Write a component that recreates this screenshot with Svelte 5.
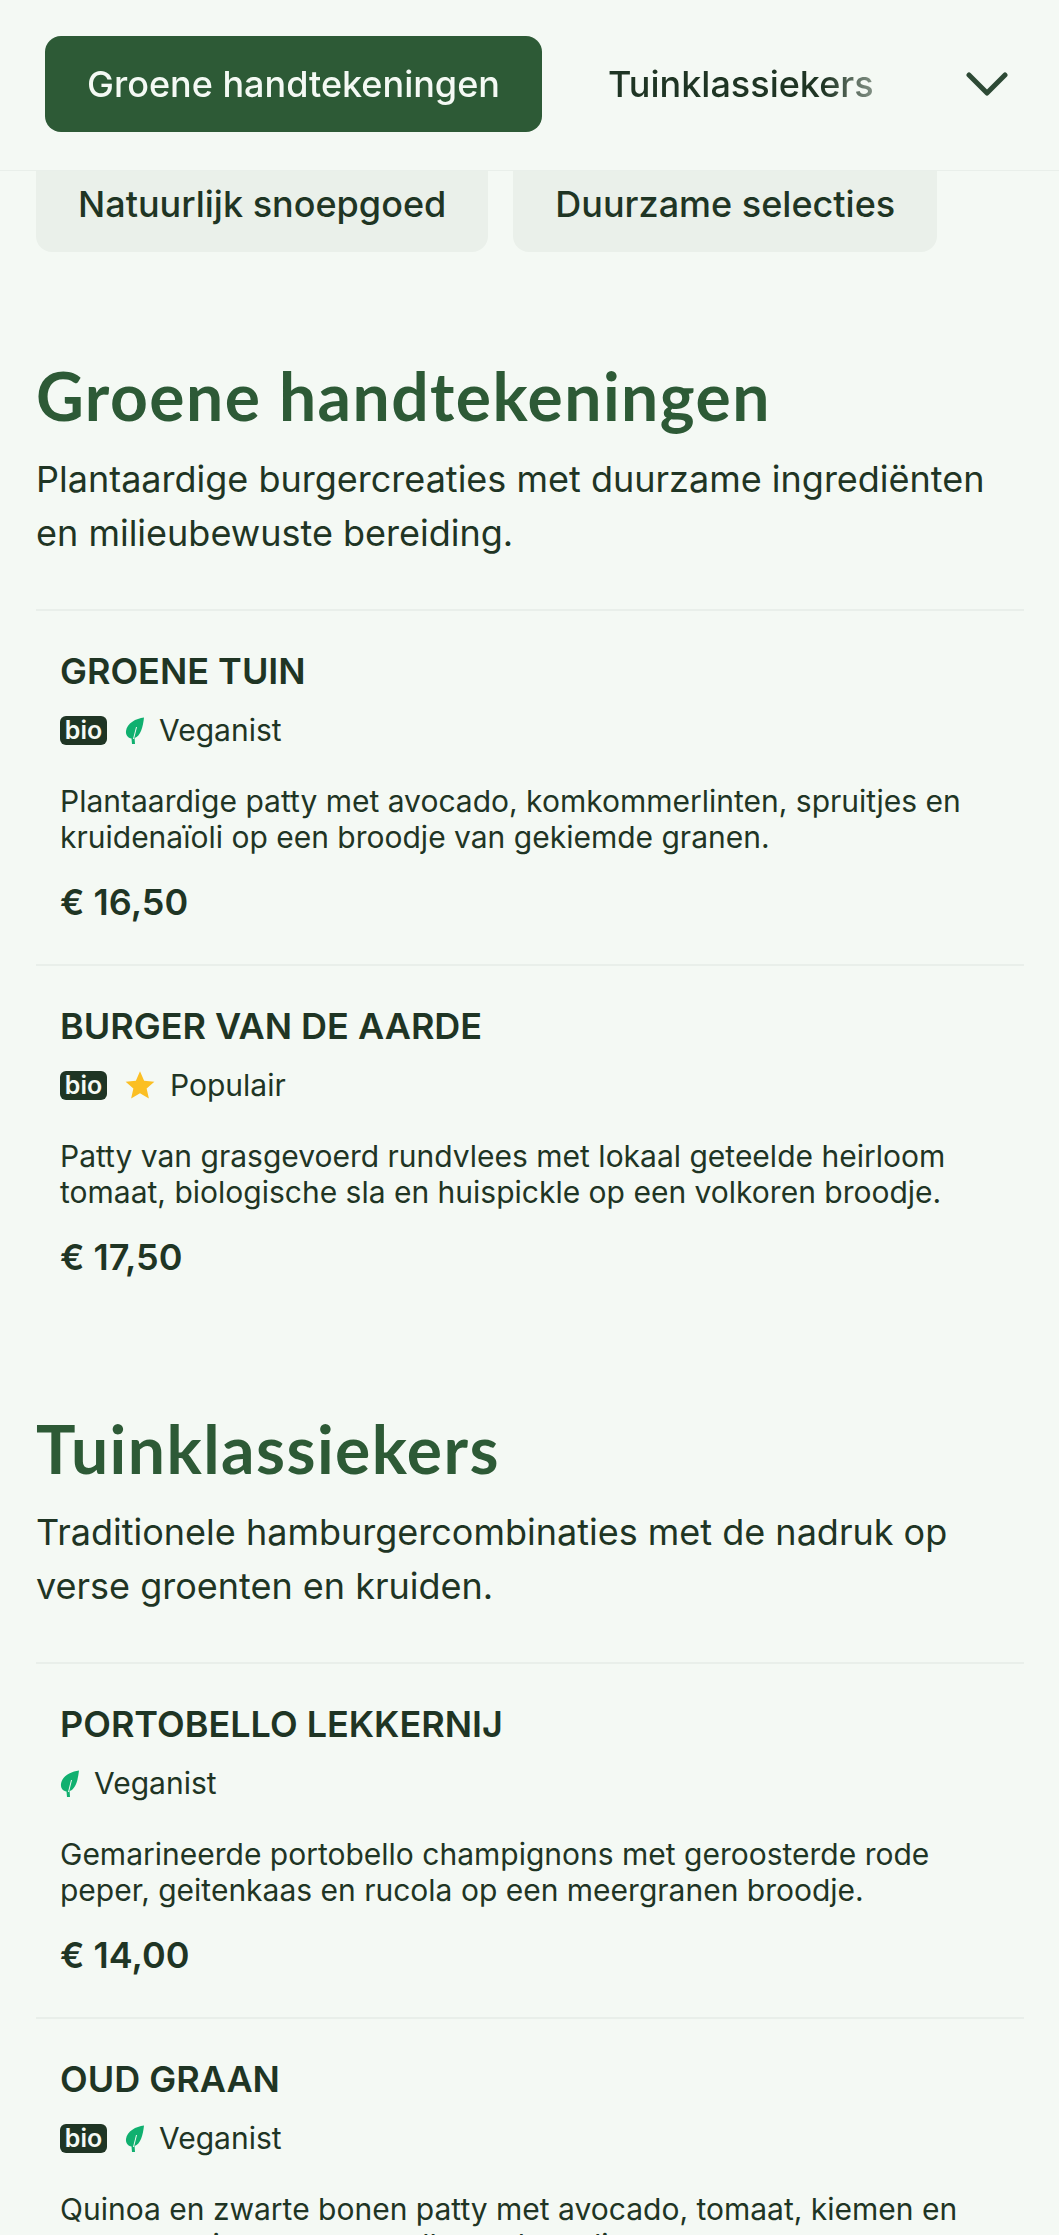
<script>
  const sections = [
    {
      title: 'Groene handtekeningen',
      intro: 'Plantaardige burgercreaties met duurzame ingrediënten en milieubewuste bereiding.',
      items: [
        { name: 'GROENE TUIN', bio: true, tag: 'Veganist', icon: 'leaf', desc: 'Plantaardige patty met avocado, komkommerlinten, spruitjes en kruidenaïoli op een broodje van gekiemde granen.', price: '€ 16,50' },
        { name: 'BURGER VAN DE AARDE', bio: true, tag: 'Populair', icon: 'star', desc: 'Patty van grasgevoerd rundvlees met lokaal geteelde heirloom tomaat, biologische sla en huispickle op een volkoren broodje.', price: '€ 17,50' }
      ]
    },
    {
      title: 'Tuinklassiekers',
      intro: 'Traditionele hamburgercombinaties met de nadruk op verse groenten en kruiden.',
      items: [
        { name: 'PORTOBELLO LEKKERNIJ', bio: false, tag: 'Veganist', icon: 'leaf', desc: 'Gemarineerde portobello champignons met geroosterde rode peper, geitenkaas en rucola op een meergranen broodje.', price: '€ 14,00' },
        { name: 'OUD GRAAN', bio: true, tag: 'Veganist', icon: 'leaf', desc: 'Quinoa en zwarte bonen patty met avocado, tomaat, kiemen en pompoenpitten op een volkoren broodje.', price: '€ 15,00' }
      ]
    }
  ];
</script>

<div class="page">
  <header class="topbar">
    <nav class="tabs">
      <span class="tab active">Groene handtekeningen</span>
      <span class="tab">Tuinklassiekers</span>
    </nav>
    <svg class="chevron" viewBox="0 0 42 26" width="42" height="26" aria-hidden="true">
      <path d="M3 4 L21 22 L39 4" fill="none" stroke="#2d4a35" stroke-width="5" stroke-linecap="round" stroke-linejoin="round" />
    </svg>
  </header>

  <div class="chips">
    <span class="chip">Natuurlijk snoepgoed</span>
    <span class="chip">Duurzame selecties</span>
  </div>

  {#each sections as s}
    <section class="section">
      <h2>{s.title}</h2>
      <p class="intro">{s.intro}</p>
      <div class="list">
        {#each s.items as item}
          <article class="item">
            <h3>{item.name}</h3>
            <div class="tags">
              {#if item.bio}<span class="bio">bio</span>{/if}
              {#if item.icon === 'leaf'}
                <svg class="leaf" viewBox="0 0 19 27" width="19" height="27" aria-hidden="true">
                  <path d="M19 0.5C11 1.500 2 6 1 14C0.500 18 3 21 6.500 21.500L7 27L10 27L9.600 21C15.500 19.500 18 10 19 0.500Z" fill="#10b06f" />
                  <path d="M8.500 22L11.500 10" fill="none" stroke="#f4f9f4" stroke-width="1" />
                </svg>
              {:else}
                <svg class="star" viewBox="0 0 24 24" width="30" height="30" aria-hidden="true">
                  <path d="M12 1L15.300 8.500L23.500 9.300L17.300 14.700L19.100 22.800L12 18.600L4.900 22.800L6.700 14.700L0.500 9.300L8.700 8.500Z" fill="#fbbf24" />
                </svg>
              {/if}
              <span class="tag">{item.tag}</span>
            </div>
            <p class="desc">{item.desc}</p>
            <div class="price">{item.price}</div>
          </article>
        {/each}
      </div>
    </section>
  {/each}
</div>

<style>
  :global(body) {
    margin: 0;
    background: #f4f9f4;
  }
  .page {
    height: 2235px;
    overflow: hidden;
    background: #f4f9f4;
    color: #1f3524;
    font-family: Inter, "Liberation Sans", sans-serif;
  }
  .topbar {
    position: relative;
    z-index: 2;
    box-sizing: border-box;
    height: 171px;
    display: flex;
    align-items: center;
    padding: 0 51px 2px 45px;
    background: #f4f9f4;
    border-bottom: 1px solid #e9efea;
  }
  .tabs {
    display: flex;
    align-items: center;
    gap: 24px;
    flex: 1;
    min-width: 0;
    margin-right: 36px;
    overflow: hidden;
    -webkit-mask-image: linear-gradient(to right, #000 88%, transparent 100%);
    mask-image: linear-gradient(to right, #000 88%, transparent 100%);
  }
  .tab {
    flex: none;
    padding: 0 42px;
    height: 96px;
    line-height: 96px;
    font-size: 36px;
    font-weight: 500;
    border-radius: 16px;
    white-space: nowrap;
  }
  .tab.active {
    background: #2d5a36;
    color: #f4f9f4;
  }
  .chevron {
    flex: none;
  }
  .chips {
    display: flex;
    gap: 25px;
    margin: -15px 0 0 36px;
  }
  .chip {
    height: 96px;
    line-height: 96px;
    padding: 0 42px;
    box-sizing: border-box;
    background: #eaf0ea;
    border-radius: 16px;
    font-size: 36px;
    font-weight: 500;
    white-space: nowrap;
  }
  .section {
    padding: 0 35px 0 36px;
    margin-top: 108px;
  }
  .section + .section {
    margin-top: 94px;
  }
  h2 {
    margin: 0;
    font-family: Lato, "Noto Sans", sans-serif;
    font-size: 66px;
    line-height: 72px;
    font-weight: 700;
    letter-spacing: 1.45px;
    color: #2d5a36;
  }
  .intro {
    margin: 20px 0 0;
    font-size: 36px;
    line-height: 54px;
  }
  .list {
    margin-top: 49px;
  }
  .item {
    padding: 37.500px 24px 0;
    height: 355px;
    box-sizing: border-box;
    border-top: 2px solid #e9efea;
  }
  h3 {
    margin: 0;
    font-size: 36px;
    line-height: 44px;
    font-weight: 600;
  }
  .tags {
    display: flex;
    align-items: center;
    gap: 15px;
    height: 40px;
    margin-top: 17.500px;
  }
  .bio {
    width: 47px;
    height: 29px;
    margin-right: 3px;
    line-height: 28px;
    text-align: center;
    background: #1f3524;
    color: #f4f9f4;
    border-radius: 6px;
    font-size: 25px;
    font-weight: 600;
  }
  .tag {
    font-size: 30px;
  }
  .leaf, .star {
    flex: none;
  }
  .desc {
    margin: 33px 0 0;
    font-size: 30px;
    line-height: 36px;
  }
  .price {
    margin-top: 25px;
    font-size: 36px;
    line-height: 44px;
    font-weight: 600;
  }
</style>
